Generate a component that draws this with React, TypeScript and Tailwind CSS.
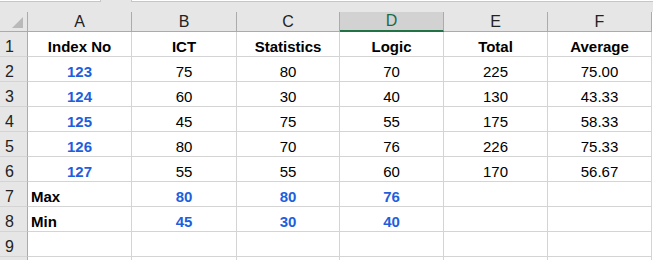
import { FC } from "react";

type Cell = { v: string; bold?: boolean; blue?: boolean; left?: boolean };

const cols = ["A", "B", "C", "D", "E", "F"];

const n = (v: string): Cell => ({ v });
const b = (v: string): Cell => ({ v, bold: true, blue: true });

const rows: Cell[][] = [
  ["Index No", "ICT", "Statistics", "Logic", "Total", "Average"].map((v) => ({ v, bold: true })),
  [b("123"), n("75"), n("80"), n("70"), n("225"), n("75.00")],
  [b("124"), n("60"), n("30"), n("40"), n("130"), n("43.33")],
  [b("125"), n("45"), n("75"), n("55"), n("175"), n("58.33")],
  [b("126"), n("80"), n("70"), n("76"), n("226"), n("75.33")],
  [b("127"), n("55"), n("55"), n("60"), n("170"), n("56.67")],
  [{ v: "Max", bold: true, left: true }, b("80"), b("80"), b("76"), n(""), n("")],
  [{ v: "Min", bold: true, left: true }, b("45"), b("30"), b("40"), n(""), n("")],
  [n(""), n(""), n(""), n(""), n(""), n("")],
  [n(""), n(""), n(""), n(""), n(""), n("")],
];

const App: FC = () => {
  return (
    <div className="w-[653px] h-[260px] overflow-hidden bg-white font-['Liberation_Sans',Arial,sans-serif] text-black">
      {/* formula bar strip */}
      <div className="h-[12px] bg-[#e6e6e6] flex items-start">
        <div className="w-[101px] h-[2px] bg-white border-b border-r border-[#c6c6c6]" />
        <div className="w-[30px]" />
        <div className="flex-1 h-[2px] bg-white border-b border-l border-[#c6c6c6]" />
      </div>

      <div className="grid grid-cols-[28px_104px_105px_103px_104px_104px_104px]">
        {/* column headers */}
        <div className="h-[20px] bg-[#e6e6e6] border-r border-b border-[#ababab] relative">
          <svg className="absolute right-[4px] bottom-[3px]" width="11" height="11" viewBox="0 0 11 11">
            <polygon points="11,0 11,11 0,11" fill="#b9b9b9" />
          </svg>
        </div>
        {cols.map((c) =>
          c === "D" ? (
            <div
              key={c}
              className="h-[20px] bg-[#d2d2d2] border-r border-[#ababab] border-b-2 border-b-[#217346] flex items-center justify-center text-[16px] leading-[18px] text-[#1b6b47]"
            >
              {c}
            </div>
          ) : (
            <div
              key={c}
              className="h-[20px] bg-[#e6e6e6] border-r border-b border-[#ababab] flex items-center justify-center text-[16px] leading-[18px] text-[#222]"
            >
              {c}
            </div>
          )
        )}

        {rows.map((row, i) => (
          <div key={i} className="contents">
            <div className="h-[25px] bg-[#e6e6e6] border-r border-[#ababab] border-b border-b-[#d4d4d4] flex items-end pl-[5px] text-[16px] leading-[19px] text-[#222]">
              {i < 9 ? i + 1 : ""}
            </div>
            {row.map((cell, j) => (
              <div
                key={j}
                className={`h-[25px] border-r border-b border-[#d4d4d4] flex items-end text-[15px] leading-[18px] whitespace-nowrap ${
                  cell.left ? "justify-start pl-[3px]" : "justify-center"
                } ${cell.bold ? "font-bold" : ""} ${cell.blue ? "text-[#1f5fdc]" : "text-black"}`}
              >
                {cell.v}
              </div>
            ))}
          </div>
        ))}
      </div>
    </div>
  );
};

export default App;
